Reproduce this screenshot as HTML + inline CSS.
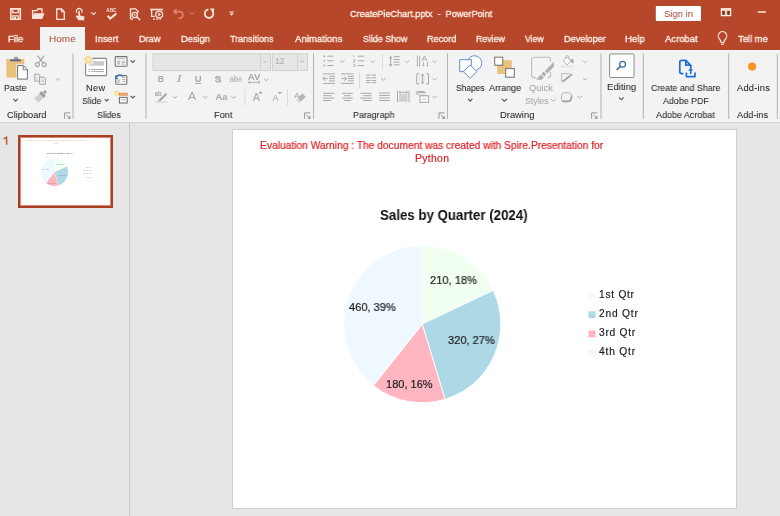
<!DOCTYPE html>
<html><head><meta charset="utf-8">
<style>
*{margin:0;padding:0;box-sizing:border-box}
html,body{width:780px;height:516px;overflow:hidden;background:#E6E6E6;font-family:"Liberation Sans",sans-serif;position:relative}
.abs{position:absolute}
#title{left:0;top:0;width:780px;height:50px;background:#B7472A}
#hometab{left:40px;top:27px;width:45px;height:23px;background:#F3F3F3}
#ribbon{left:0;top:50px;width:780px;height:72px;background:#F3F3F3}
#rbline{left:0;top:122px;width:780px;height:1px;background:#D4D4D4}
#divider{left:129px;top:123px;width:1px;height:393px;background:#C8C8C8}
#slide{left:232px;top:129px;width:505px;height:380px;background:#fff;border:1px solid #CFCFCF}
#thumb{left:18px;top:135px;width:95px;height:73px;background:#fff;border:2px solid #A83F24;box-shadow:inset 0 0 0 1px #D98A72}
.t{position:absolute;white-space:pre;line-height:1;transform-origin:0 0;will-change:transform}
.lt{-webkit-text-stroke:0.35px currentColor}
.dk{-webkit-text-stroke:0.05px currentColor}
.sl{-webkit-text-stroke:0.2px currentColor}
svg{position:absolute;left:0;top:0;will-change:transform}
</style></head><body>
<div id="title" class="abs"></div>
<div id="hometab" class="abs"></div>
<div id="ribbon" class="abs"></div>
<div id="rbline" class="abs"></div>
<div id="divider" class="abs"></div>
<div id="slide" class="abs"></div>
<div id="thumb" class="abs"></div>
<svg width="780" height="516" viewBox="0 0 780 516">
<g id="qat" fill="none" stroke="#FBE5DA" stroke-width="1.6">
<!-- save -->
<path d="M10.8,8.9 H20.3 V19.2 H10.8 Z"/>
<path d="M12.8,9.5 V12.6 H18.3 V9.5" stroke-width="1.3"/>
<path d="M12.8,19 V15.8 H18.3 V19" stroke-width="1.3"/>
<rect x="14" y="16.8" width="2" height="2.2" fill="#FBE5DA" stroke="none"/>
<!-- open folder -->
<path d="M32.6,18.6 V10.6 H36.6 L37.8,9 H42 V12.8" stroke-width="1.3"/>
<path d="M33.8,13.2 H44.6 L42.2,19 H32 Z" fill="#FBE5DA" stroke="none"/>
<!-- new doc -->
<path d="M56.7,9 H61.6 L64.3,11.7 V19.3 H56.7 Z" stroke-width="1.3"/>
<path d="M61.4,9.2 V11.9 H64.1" stroke-width="1"/>
<!-- touch -->
<path d="M76.7,12.8 A2.9,2.9 0 1 1 81.9,12.5" stroke-width="1.3"/>
<path d="M79.2,16.5 V11.2" stroke-width="1.8"/>
<path d="M78.5,16 L76,15.6 L75.8,16.6 L78.6,20.2 H84.2 L84.4,16.6 L80,15.4 Z" fill="#FBE5DA" stroke="none"/>
<path d="M91.3,12.4 L93.6,14.5 L95.9,12.4" stroke-width="1.1"/>
<!-- abc check -->
<text x="106.3" y="11.7" font-family="Liberation Sans" font-weight="bold" font-size="4.6" fill="#FBE5DA" stroke="none" textLength="10" lengthAdjust="spacingAndGlyphs">ABC</text>
<path d="M107.6,15.8 L110.2,18.6 L116.4,13.4" stroke-width="2"/>
<!-- print preview -->
<path d="M130.5,19 V8.8 H135.6 L138,11.2 V13" stroke-width="1.3"/>
<path d="M130.5,19 H133" stroke-width="1.3"/>
<circle cx="134.8" cy="15" r="2.6" stroke-width="1.4"/>
<path d="M136.8,17 L140.2,20" stroke-width="1.6"/>
<rect x="134" y="14.2" width="1.6" height="1.6" fill="#FBE5DA" stroke="none" opacity="0.7"/>
<!-- present -->
<path d="M150.2,9.5 H162.9" stroke-width="1.6"/>
<path d="M151.6,10 V16.3 H154.8" stroke-width="1.3"/>
<circle cx="159.2" cy="14.5" r="3.4" stroke-width="1.3"/>
<path d="M158.3,12.6 L161,14.5 L158.3,16.4 Z" fill="#FBE5DA" stroke="none"/>
<path d="M153,19.2 H161" stroke-width="1.2" stroke-dasharray="2,1.2"/>
<!-- undo dim -->
<g stroke="#E38568" stroke-width="1.6">
<path d="M174,11.6 H179.5 A3.3,3.3 0 0 1 179.5,18.2 H178.6"/>
<path d="M176.6,9 L174,11.6 L176.6,14.2"/>
<path d="M189.7,12.6 L192,14.4 L194.3,12.6" stroke-width="1"/>
</g>
<!-- redo -->
<path d="M208.4,9.35 A4.3,4.3 0 1 0 212.4,10.9" stroke-width="1.8"/>
<path d="M209.6,8.5 L214.2,8.5 L213.6,13 Z" fill="#FBE5DA" stroke="none"/>
<!-- customize -->
<path d="M229.6,12 H233.6" stroke-width="1.2"/>
<path d="M229.4,13.4 L233.8,13.4 L231.6,15.8 Z" fill="#FBE5DA" stroke="none"/>
<!-- ribbon display -->
<rect x="720.8" y="8.2" width="10.4" height="8" fill="#F6CFC0" stroke="none"/>
<rect x="721.4" y="8.8" width="9.2" height="6.8" fill="none" stroke="#FFF2EA" stroke-width="1"/>
<rect x="722.2" y="11" width="2.6" height="3.8" fill="#7E2A14" stroke="none"/>
<rect x="727.2" y="11" width="2.6" height="3.8" fill="#7E2A14" stroke="none"/>
<!-- minimize -->
<path d="M757.8,12 H766" stroke-width="1.5"/>
<!-- sign in button -->
<rect x="655.8" y="6" width="45.2" height="15" rx="1" fill="#FFFFFF" stroke="none"/>
<!-- bulb -->
<path d="M721.2,42.6 Q721,40.6 719.4,39 A4.3,4.3 0 1 1 725.6,39 Q724,40.6 723.8,42.6 Z" stroke-width="1.2"/>
<path d="M721.2,44.4 H723.8" stroke-width="1.2"/>
</g>
<g id="ribbon-icons">
<!-- dividers -->
<g fill="#B4B4B4">
<rect x="72.5" y="53.5" width="1" height="65.5"/>
<rect x="145.5" y="53.5" width="1" height="65.5"/>
<rect x="313" y="53.5" width="1" height="65.5"/>
<rect x="447" y="53.5" width="1" height="65.5"/>
<rect x="600.5" y="53.5" width="1" height="65.5"/>
<rect x="642.8" y="53.5" width="1" height="65.5"/>
<rect x="728.2" y="53.5" width="1" height="65.5"/>
<rect x="776.8" y="53.5" width="1" height="65.5"/>
</g>
<g fill="#DADADA">
<rect x="244.5" y="89" width="1" height="16.5"/>
<rect x="287" y="89" width="1" height="16.5"/>
<rect x="382" y="54" width="1" height="15.5"/>
<rect x="359" y="72" width="1" height="16"/>
</g>
<!-- dialog launchers -->
<g fill="none" stroke="#8A8A8A" stroke-width="0.9">
<path d="M64.6,118.7 V112.9 H70.2"/><path d="M66.6,114.9 L70,118.3 M70,115.9 V118.3 H67.6"/>
<path d="M304.6,118.7 V112.9 H310.2"/><path d="M306.6,114.9 L310,118.3 M310,115.9 V118.3 H307.6"/>
<path d="M439,118.7 V112.9 H444.6"/><path d="M441,114.9 L444.4,118.3 M444.4,115.9 V118.3 H442"/>
<path d="M591.6,118.7 V112.9 H597.2"/><path d="M593.6,114.9 L597,118.3 M597,115.9 V118.3 H594.6"/>
</g>
<!-- dark chevrons -->
<g fill="none" stroke="#555" stroke-width="1.1">
<path d="M13.4,98.9 L15.6,101.1 L17.8,98.9"/>
<path d="M104.8,99.1 L106.7,101 L108.6,99.1"/>
<path d="M130.6,60.3 L132.8,62.4 L135,60.3"/>
<path d="M130.6,95.9 L132.8,98 L135,95.9"/>
<path d="M468,98.9 L470.2,101.2 L472.4,98.9"/>
<path d="M501.8,98.9 L504.4,101.2 L507,98.9"/>
<path d="M619,97.5 L621.3,99.8 L623.6,97.5"/>
</g>
<!-- gray chevrons -->
<g fill="none" stroke="#B0B0B0" stroke-width="1">
<path d="M55.8,78.4 L57.9,80.3 L60,78.4"/>
<path d="M172.6,96.1 L174.9,98.2 L177.2,96.1"/>
<path d="M202.9,96.1 L205.2,98.2 L207.5,96.1"/>
<path d="M231.2,96.1 L233.6,98.2 L236,96.1"/>
<path d="M264,78.7 L266.3,80.8 L268.6,78.7"/>
<path d="M340.3,60.4 L342.4,62.6 L344.5,60.4"/>
<path d="M370.3,60.4 L372.6,62.6 L374.9,60.4"/>
<path d="M404.8,60.6 L407,62.7 L409.2,60.6"/>
<path d="M432.5,60.6 L434.6,62.7 L436.7,60.6"/>
<path d="M381.2,78.1 L383.5,80.2 L385.8,78.1"/>
<path d="M432.5,78.1 L434.6,80.2 L436.7,78.1"/>
<path d="M432.5,96 L434.6,98.1 L436.7,96"/>
<path d="M551,99.2 L553.3,101.2 L555.6,99.2"/>
<path d="M583,60.6 L585.1,62.7 L587.2,60.6"/>
<path d="M583,78.1 L585.1,80.2 L587.2,78.1"/>
<path d="M577.2,96 L579.6,98.2 L582,96"/>
</g>

<!-- Paste -->
<path d="M6.4,59 H10 V61.8 H21 V59 H24.4 V65 H17 V77.6 H6.4 Z" fill="#EBC27C"/>
<path d="M10.1,61.6 V59.3 H14.2 V57.4 Q16,56 17.8,57.4 V59.3 H20.9 V61.6 Z" fill="#6A6A6A"/>
<circle cx="16" cy="58.4" r="0.8" fill="#F3F3F3"/>
<path d="M17.6,65.6 H23.4 L27.4,69.6 V79.1 H17.6 Z" fill="#F3F3F3" stroke="#F3F3F3" stroke-width="2.6"/>
<path d="M17.6,65.6 H23.4 L27.4,69.6 V79.1 H17.6 Z" fill="#FFFFFF" stroke="#707070" stroke-width="1"/>
<path d="M23.2,65.8 V69.8 H27.2" fill="none" stroke="#707070" stroke-width="0.9"/>
<!-- scissors -->
<g fill="none" stroke="#A3A3A3" stroke-width="1.1">
<path d="M37.4,55.6 L42.9,62.6 M44.2,55.6 L38.7,62.6"/>
<circle cx="37.4" cy="64.6" r="2"/><circle cx="44.2" cy="64.6" r="2"/>
</g>
<!-- copy -->
<g fill="#F3F3F3" stroke="#A3A3A3" stroke-width="1">
<path d="M34.7,74.2 H38.6 L39.6,75.2 V81.2 H34.7 Z"/>
<path d="M39.6,77.2 H44 L45.4,78.6 V84.3 H39.6 Z"/>
</g>
<g stroke="#BDBDBD" stroke-width="0.8"><path d="M35.8,77.5 H37.6 M35.8,79.2 H37.6 M41,80 H44 M41,81.6 H44"/></g>
<!-- format painter -->
<g transform="translate(39.6,97.4) rotate(45)">
<rect x="-3" y="-2.6" width="6" height="7.2" fill="#D0D0D0"/>
<rect x="-3.2" y="-5.6" width="6.4" height="3" rx="0.6" fill="#9C9C9C"/>
<rect x="-1.6" y="-9.2" width="3.2" height="3.2" rx="1" fill="#A4A4A4"/>
</g>
<!-- New slide -->
<rect x="85.6" y="58.4" width="21" height="17.2" rx="1.3" fill="#FFFFFF" stroke="#858585" stroke-width="1.1"/>
<rect x="88.4" y="61.2" width="15.5" height="4.4" fill="#C9C9C9"/>
<path d="M88.4,69.5 H90 M91.2,69.5 H103.9 M88.4,71.6 H90 M91.2,71.6 H103.9" stroke="#9E9E9E" stroke-width="0.9"/>
<polygon points="93.50,59.80 91.15,60.73 92.51,62.86 90.06,62.23 89.91,64.75 88.30,62.80 86.69,64.75 86.54,62.23 84.09,62.86 85.45,60.73 83.10,59.80 85.45,58.87 84.09,56.74 86.54,57.37 86.69,54.85 88.30,56.80 89.91,54.85 90.06,57.37 92.51,56.74 91.15,58.87" fill="#F3F3F3" stroke="#F3F3F3" stroke-width="1.4"/>
<polygon points="93.30,59.80 90.96,60.67 92.35,62.74 89.95,62.07 89.85,64.56 88.30,62.60 86.75,64.56 86.65,62.07 84.25,62.74 85.64,60.67 83.30,59.80 85.64,58.93 84.25,56.86 86.65,57.53 86.75,55.04 88.30,57.00 89.85,55.04 89.95,57.53 92.35,56.86 90.96,58.93" fill="#F5D985"/>
<circle cx="88.3" cy="59.8" r="1.8" fill="#FBEFC4"/>
<!-- layout -->
<rect x="115.2" y="56.6" width="11.8" height="9.6" rx="0.8" fill="#FFFFFF" stroke="#707070" stroke-width="1.1"/>
<path d="M117,58.6 H125.2" stroke="#BDBDBD" stroke-width="1.1"/>
<rect x="117" y="60.4" width="3.2" height="4.2" fill="#C4C4C4"/>
<path d="M121.4,61 H125.2 M121.4,62.6 H125.2 M121.4,64.2 H125.2" stroke="#9A9A9A" stroke-width="0.8"/>
<!-- reset -->
<rect x="115.8" y="75.6" width="11" height="8.6" rx="0.8" fill="#FFFFFF" stroke="#747474" stroke-width="1.1"/>
<path d="M117.2,79 H120.2 V83 H117.2 Z" fill="#CFCFCF"/>
<path d="M122,77.4 H125.4 M122,79.4 H125.4 M122,81.4 H125.4" stroke="#9A9A9A" stroke-width="0.8"/>
<path d="M116.4,77.6 A3.6,3.2 0 0 1 123,76.4" fill="none" stroke="#3E76B4" stroke-width="1.5"/>
<path d="M115,75.6 V79 H118.4 Z" fill="#3E76B4"/>
<!-- section -->
<polygon points="120.40,93.20 118.65,93.97 119.35,95.75 117.57,95.05 116.80,96.80 116.03,95.05 114.25,95.75 114.95,93.97 113.20,93.20 114.95,92.43 114.25,90.65 116.03,91.35 116.80,89.60 117.57,91.35 119.35,90.65 118.65,92.43" fill="#F5D985"/>
<circle cx="116.8" cy="93.2" r="1.2" fill="#FBEFC4"/>
<rect x="119.4" y="93.2" width="7.8" height="2" fill="#F2C18E" stroke="#E07B39" stroke-width="0.8"/>
<rect x="119.4" y="97.4" width="7.8" height="5.6" fill="#FFFFFF" stroke="#707070" stroke-width="1.1"/>
<path d="M120.8,99.8 H126" stroke="#A0A0A0" stroke-width="0.8"/>

<!-- Font boxes -->
<rect x="153.1" y="53.8" width="117.4" height="16.8" fill="#E6E6E6" stroke="#D0D0D0" stroke-width="1"/>
<path d="M260.6,54 V70.5" stroke="#D0D0D0" stroke-width="1"/>
<rect x="272.4" y="53.8" width="35" height="16.8" fill="#E6E6E6" stroke="#D0D0D0" stroke-width="1"/>
<path d="M297.6,54 V70.5" stroke="#D0D0D0" stroke-width="1"/>
<g fill="none" stroke="#A8A8A8" stroke-width="0.8"><path d="M263.3,60.9 L265,62.3 L266.7,60.9"/><path d="M300.2,60.9 L302,62.3 L303.8,60.9"/></g>
<g fill="#A6A6A6" font-family="Liberation Sans">
<text x="157.8" y="82.1" font-size="9.2" font-weight="bold" textLength="6.2" lengthAdjust="spacingAndGlyphs">B</text>
<text x="176.6" y="82.1" font-size="9.4" font-family="Liberation Serif" font-style="italic" textLength="5.2" lengthAdjust="spacingAndGlyphs">I</text>
<text x="194.8" y="82.1" font-size="9.2" font-weight="bold" textLength="6.8" lengthAdjust="spacingAndGlyphs">U</text>
<rect x="194.8" y="83" width="6.6" height="0.9"/>
<text x="214.4" y="82.2" font-size="9.4" font-weight="bold" fill="#D0D0D0" textLength="6.8" lengthAdjust="spacingAndGlyphs" transform="translate(0.8,0.8)">S</text>
<text x="214.4" y="82.2" font-size="9.4" font-weight="bold" textLength="6.8" lengthAdjust="spacingAndGlyphs">S</text>
<text x="229.6" y="82.4" font-size="8.6" textLength="12.4" lengthAdjust="spacingAndGlyphs">abc</text>
<rect x="229.4" y="79.2" width="12.8" height="0.8" fill="#C4C4C4"/>
<text x="247.8" y="79.6" font-size="8.6" font-weight="bold" textLength="12.6" lengthAdjust="spacingAndGlyphs">AV</text>
<text x="188" y="100.4" font-size="11.2" textLength="8.2" lengthAdjust="spacingAndGlyphs">A</text>
<text x="215.6" y="99.8" font-size="9" font-weight="bold" textLength="11.8" lengthAdjust="spacingAndGlyphs">Aa</text>
<text x="252.8" y="101.3" font-size="10.2" textLength="7.2" lengthAdjust="spacingAndGlyphs">A</text>
<text x="272.4" y="101.3" font-size="8.6" textLength="6" lengthAdjust="spacingAndGlyphs">A</text>
<text x="154.8" y="96.4" font-size="7.6" font-weight="bold" textLength="6.8" lengthAdjust="spacingAndGlyphs">ab</text>
<text x="294.2" y="97.5" font-size="8" textLength="5.6" lengthAdjust="spacingAndGlyphs">A</text>
</g>
<g fill="none" stroke="#A6A6A6" stroke-width="0.9">
<path d="M248.4,82.3 H260 M250,80.8 L248.4,82.3 L250,83.8 M258.4,80.8 L260,82.3 L258.4,83.8"/>
<path d="M259.2,93.6 L260.6,91.9 L262,93.6" stroke-width="1.1"/>
</g>
<path d="M277.6,92 H282 L279.8,94.2 Z" fill="#A6A6A6"/>
<!-- highlighter -->
<path d="M158.6,100 L165.6,93 L167.2,94.6 L160.2,101.6 Z" fill="#A6A6A6"/>
<path d="M158.6,100 L157.6,101.4 L159.8,101.6 Z" fill="#A6A6A6"/>
<rect x="155.2" y="101.6" width="12.2" height="1.2" fill="#D8D8D8"/>
<!-- clear formatting eraser -->
<path d="M297.6,98.2 L302.4,93.4 L305.8,96.8 L301,101.6 Z" fill="#B5B5B5"/>
<path d="M297,99.6 L299.8,102.4" stroke="#A6A6A6" stroke-width="1"/>

<!-- Paragraph icons -->
<g fill="#A8A8A8">
<circle cx="324.2" cy="56.2" r="0.9"/><circle cx="324.2" cy="60.8" r="0.9"/><circle cx="324.2" cy="65.5" r="0.9"/>
</g>
<g stroke="#A8A8A8" stroke-width="1" fill="none">
<path d="M327.2,56.2 H333.4 M327.2,60.8 H333.4 M327.2,65.5 H333.4"/>
<path d="M357.6,56.2 H364.2 M357.6,60.8 H364.2 M357.6,65.5 H364.2"/>
<path d="M353.8,55 V57.4 M353.2,59.8 H355.2 L353.2,62 H355.4 M353.2,64.4 H355.2 L354.2,65.4 L355.2,66.4 H353.2" stroke-width="0.7"/>
<!-- indents -->
<path d="M322.8,73.9 H334.9 M329,76.4 H334.9 M329,78.6 H334.9 M329,80.9 H334.9 M322.8,83.4 H334.9"/>
<path d="M323,78.6 H328 M325.2,76.4 L323,78.6 L325.2,80.8"/>
<path d="M341,73.9 H353.8 M347.6,76.4 H353.8 M347.6,78.6 H353.8 M347.6,80.9 H353.8 M341,83.4 H353.8"/>
<path d="M341.2,78.6 H346.4 M344.2,76.4 L346.4,78.6 L344.2,80.8"/>
<!-- columns -->
<path d="M366,75.1 H370.4 M371.6,75.1 H376 M366,77.8 H370.4 M371.6,77.8 H376 M366,80.5 H370.4 M371.6,80.5 H376 M366,82.6 H370.4 M371.6,82.6 H376"/>
<!-- align -->
<path d="M323.2,93.3 H334.2 M323.2,95.7 H331.2 M323.2,98.1 H334.2 M323.2,100.5 H331.2"/>
<path d="M342,93.3 H352.8 M344,95.7 H350.8 M342,98.1 H352.8 M344,100.5 H350.8"/>
<path d="M360.3,93.3 H371.5 M363.3,95.7 H371.5 M360.3,98.1 H371.5 M363.3,100.5 H371.5"/>
<path d="M379.1,93 H389.8 M379.1,95.5 H389.8 M379.1,98 H389.8 M379.1,100.5 H389.8"/>
<!-- line spacing -->
<path d="M390.7,57.6 V64.8" stroke-width="1"/>
<path d="M389,58.4 L390.7,55.6 L392.4,58.4 Z M389,64 L390.7,66.8 L392.4,64 Z" fill="#A8A8A8" stroke="none"/>
<path d="M393.8,56.7 H399.6 M393.8,59.5 H399.6 M393.8,62.2 H399.6 M393.8,64.8 H399.6"/>
<!-- text direction -->
<path d="M417.4,55.6 V65.4 M419.6,55.6 V65.4 M423.5,62 V65.4 M427.5,62 V65.4" stroke-width="0.9"/>
<path d="M416.4,65 L417.4,66.8 L418.4,65 Z M418.6,65 L419.6,66.8 L420.6,65 Z M422.5,65 L423.5,66.8 L424.5,65 Z M426.5,65 L427.5,66.8 L428.5,65 Z" fill="#A8A8A8" stroke="none"/>
<!-- align text -->
<path d="M419.4,73.8 H416.8 V84 H419.4 M426,73.8 H428.5 V84 H426" stroke-width="1"/>
<path d="M422.6,75.6 V82.2" stroke-width="0.9"/>
<path d="M420.8,76 L422.6,73.6 L424.4,76 Z M420.8,81.8 L422.6,84.2 L424.4,81.8 Z" fill="#A8A8A8" stroke="none"/>
<path d="M419,77.6 H426.4 M419,80 H426.4" stroke-width="0.7" stroke-dasharray="1,0.8" stroke="#C4C4C4"/>
<!-- distribute -->
<path d="M397.5,90.8 V102.2 M409,90.8 V102.2 M399.4,92.3 H407.2" stroke-width="1"/>
<path d="M400.6,90.9 L399,92.3 L400.6,93.7 M406,90.9 L407.6,92.3 L406,93.7" stroke-width="0.9"/>
<rect x="399.2" y="94.2" width="8.2" height="7.4" fill="#C9C9C9" stroke="none"/>
<path d="M399.2,96 H407.4 M399.2,97.9 H407.4 M399.2,99.8 H407.4" stroke="#E2E2E2" stroke-width="0.6"/>
<!-- smartart -->
<path d="M416.4,91 H424.2 L426.6,93.2 H418.6 Z" fill="#B4B4B4" stroke="none"/>
<path d="M417.2,93.2 L419.4,95.4 H426.6" stroke="#A8A8A8" stroke-width="0.9"/>
<path d="M416.4,91.6 V94.6" stroke="#A8A8A8" stroke-width="0.9"/>
<rect x="420" y="95.8" width="8.6" height="6.6" fill="#FAFAFA" stroke="#A8A8A8" stroke-width="1"/>
<path d="M422,99.2 H426.6" stroke="#BDBDBD" stroke-width="0.7"/>
</g>
<g fill="#A6A6A6" font-family="Liberation Sans">
<text x="421.6" y="60.9" font-size="7.2" textLength="6" lengthAdjust="spacingAndGlyphs">A</text>
</g>

<!-- Shapes -->
<g fill="#FFFFFF" stroke="#5F8DCB" stroke-width="1">
<path d="M468.4,59.2 A7.2,7.2 0 1 1 476.4,69.95 L471.8,65.4 V59.2 Z" stroke="none"/>
<path d="M468.4,59.2 A7.2,7.2 0 1 1 476.4,69.95" fill="none"/>
<path d="M459.7,71.6 V59.7 H471.4 V65.6 M459.7,71.6 H465.4" fill="#FFFFFF"/>
<path d="M470.1,64.9 L476.8,71.6 L470.1,78.3 L463.4,71.6 Z"/>
</g>
<!-- Arrange -->
<rect x="497.2" y="60.2" width="14.6" height="13.8" fill="#EBC27C"/>
<rect x="494.7" y="57.2" width="8" height="8" fill="#FFFFFF" stroke="#6E6E6E" stroke-width="1"/>
<rect x="505.7" y="68.6" width="8.6" height="8.6" fill="#FFFFFF" stroke="#6E6E6E" stroke-width="1"/>
<!-- Quick styles -->
<path d="M536.3,77.6 H534.2 Q531.6,77.6 531.6,75 V60 Q531.6,57.3 534.3,57.3 H548 Q550.6,57.3 550.6,60 V61.8" fill="none" stroke="#BDBDBD" stroke-width="1.1"/>
<path d="M550.6,72.2 V75 Q550.6,77.6 548,77.6 H547.6" fill="none" stroke="#BDBDBD" stroke-width="1.1"/>
<path d="M536.2,79.8 L540.8,74.6 L543.8,77.4 L541.8,79.8 Z" fill="#B0B0B0"/>
<path d="M541.6,73.8 L543.6,71.8 L546.2,74.4 L544.2,76.4 Z" fill="#A8A8A8"/>
<path d="M544.8,71.2 L553.8,61.8 L554,66.4 L547.4,73.6 Z" fill="#B0B0B0"/>
<!-- shape fill -->
<path d="M563.2,61 L567.1,57.1 L571,61 L567.1,64.9 Z" fill="#FFFFFF" stroke="#B0B0B0" stroke-width="1"/>
<path d="M565.4,58.6 Q565.2,55.2 567.6,55.4 Q569.4,55.8 568.8,58.6" fill="none" stroke="#B0B0B0" stroke-width="0.9"/>
<path d="M570.4,59.6 L572.6,58.8 L574,61.6 Q573.6,63.6 572,63.2 Z" fill="#A8A8A8"/>
<rect x="560.8" y="65.8" width="13.4" height="1.4" fill="#E2E2E2"/>
<!-- shape outline -->
<path d="M561.6,81 V73.6 H569.6" fill="none" stroke="#B8B8B8" stroke-width="1"/>
<path d="M562.6,80.6 L571.4,73.4 L572.8,74.8 L564,82 L561.8,82.2 Z" fill="#A8A8A8"/>
<!-- effects -->
<path d="M563.4,92.8 H569.4 Q572.2,93.4 571.8,96.4 L570.8,99.6 Q570,101.4 568.2,101.4 H563.8 Q561,101 561.4,98.2 L562,94.6 Q562.4,92.8 563.4,92.8 Z" fill="#F2F2F2" stroke="#B4B4B4" stroke-width="1"/>
<path d="M571.8,96.4 L570.8,99.6 Q570,101.4 568.2,101.4 H563.8 Q563,101.3 562.4,101" fill="none" stroke="#9E9E9E" stroke-width="1.6"/>
<!-- Editing button -->
<rect x="609.6" y="53.9" width="24.4" height="23.6" rx="1" fill="#FCFCFC" stroke="#8E8E8E" stroke-width="1"/>
<circle cx="622.6" cy="64.2" r="2.9" fill="none" stroke="#416E9F" stroke-width="1.3"/>
<path d="M620.5,66.4 L617.2,69.4" stroke="#416E9F" stroke-width="1.7" stroke-linecap="round"/>
<!-- Acrobat -->
<g fill="none" stroke="#1D6FD6" stroke-width="1.7" stroke-linejoin="round">
<path d="M683.4,73.6 H681.6 Q679.8,73.6 679.8,71.8 V62.2 Q679.8,60.4 681.6,60.4 H685.8 L690.8,65.4 V68"/>
<path d="M685.8,60.6 V65.2 H690.6"/>
<path d="M686.4,72.4 V76.6 H695 V72.4"/>
<path d="M690.7,74 V68.6"/>
</g>
<path d="M688.2,70.6 L690.7,67.8 L693.2,70.6 Z" fill="#1D6FD6"/>
<!-- Add-ins -->
<rect x="745.5" y="57.5" width="20" height="20" fill="none" stroke="#EDEDED" stroke-width="0.8"/>
<circle cx="752.1" cy="66.6" r="4.1" fill="#F7951F"/>
</g>
<g id="pie">
<path d="M422.2,324.1 L422.20,245.50 A78.6,78.6 0 0 1 493.20,290.39 Z" fill="#F0FFF0" stroke="#FFFFFF" stroke-width="0.9" stroke-linejoin="round"/>
<path d="M422.2,324.1 L493.20,290.39 A78.6,78.6 0 0 1 445.05,399.31 Z" fill="#ADD8E6" stroke="#FFFFFF" stroke-width="0.9" stroke-linejoin="round"/>
<path d="M422.2,324.1 L445.05,399.31 A78.6,78.6 0 0 1 373.27,385.61 Z" fill="#FFB6C1" stroke="#FFFFFF" stroke-width="0.9" stroke-linejoin="round"/>
<path d="M422.2,324.1 L373.27,385.61 A78.6,78.6 0 0 1 422.20,245.50 Z" fill="#F0F8FF" stroke="#FFFFFF" stroke-width="0.9" stroke-linejoin="round"/>
<rect x="588.5" y="292.5" width="7" height="7" fill="#F0FFF0"/>
<rect x="588.5" y="311.3" width="7" height="6.8" fill="#ADD8E6"/>
<rect x="588.5" y="330.5" width="7" height="7" fill="#FFB6C1"/>
<rect x="588.5" y="349.5" width="7" height="7" fill="#F0F8FF"/>
</g>
<g id="thumbcontent" transform="translate(21,138) scale(0.17624) translate(-233,-130)">
<use href="#pie"/>
<g font-family="Liberation Sans" fill="#1E1E1E" opacity="0.6">
<text x="260.8" y="149.4" font-size="10.6" fill="#F06060" textLength="342.7" lengthAdjust="spacingAndGlyphs">Evaluation Warning : The document was created with Spire.Presentation for</text>
<text x="415.4" y="162.5" font-size="10.6" fill="#F06060" textLength="32.6" lengthAdjust="spacingAndGlyphs">Python</text>
<text x="379.8" y="220" font-size="14" font-weight="bold" fill="#222" textLength="146.7" lengthAdjust="spacingAndGlyphs">Sales by Quarter (2024)</text>
<text x="430.8" y="284.6" font-size="11.5" textLength="46.1" lengthAdjust="spacingAndGlyphs" fill="#555">210, 18%</text>
<text x="349.6" y="311.5" font-size="11.5" textLength="46.2" lengthAdjust="spacingAndGlyphs" fill="#555">460, 39%</text>
<text x="448.5" y="344.2" font-size="11.5" textLength="46.1" lengthAdjust="spacingAndGlyphs" fill="#555">320, 27%</text>
<text x="386.9" y="388.5" font-size="11.5" textLength="45.6" lengthAdjust="spacingAndGlyphs" fill="#555">180, 16%</text>
<text x="599.4" y="298.1" font-size="10" textLength="34" lengthAdjust="spacingAndGlyphs" fill="#777">1st Qtr</text>
<text x="599.4" y="317.6" font-size="10" textLength="38" lengthAdjust="spacingAndGlyphs" fill="#777">2nd Qtr</text>
<text x="599.4" y="336.8" font-size="10" textLength="36" lengthAdjust="spacingAndGlyphs" fill="#777">3rd Qtr</text>
<text x="599.4" y="356.1" font-size="10" textLength="36" lengthAdjust="spacingAndGlyphs" fill="#777">4th Qtr</text>
</g>
</g>
<path d="M6.6,144.8 V137 L3.6,139" fill="none" stroke="#B95A3C" stroke-width="1.5" stroke-linejoin="round"/>

</svg>
<span class="t lt" style="left:350.44px;top:9.47px;font-size:9.92px;color:#FFF0E8;font-weight:normal;letter-spacing:0.000px;transform:scaleX(0.9191)">CreatePieChart.pptx  -  PowerPoint</span>
<span class="t " style="left:663.82px;top:8.57px;font-size:9.92px;color:#A04530;font-weight:normal;letter-spacing:0.000px;transform:scaleX(0.9603)">Sign in</span>
<span class="t lt" style="left:7.95px;top:33.99px;font-size:9.78px;color:#FFF0E8;font-weight:normal;letter-spacing:0.000px;transform:scaleX(0.9646)">File</span>
<span class="t " style="left:48.90px;top:33.99px;font-size:9.78px;color:#B04A30;font-weight:normal;letter-spacing:0.000px;transform:scaleX(1.0263)">Home</span>
<span class="t lt" style="left:95.46px;top:33.99px;font-size:9.78px;color:#FFF0E8;font-weight:normal;letter-spacing:0.000px;transform:scaleX(0.9495)">Insert</span>
<span class="t lt" style="left:138.86px;top:33.99px;font-size:9.78px;color:#FFF0E8;font-weight:normal;letter-spacing:0.000px;transform:scaleX(0.9408)">Draw</span>
<span class="t lt" style="left:180.66px;top:33.99px;font-size:9.78px;color:#FFF0E8;font-weight:normal;letter-spacing:0.000px;transform:scaleX(0.9518)">Design</span>
<span class="t lt" style="left:230.42px;top:33.99px;font-size:9.78px;color:#FFF0E8;font-weight:normal;letter-spacing:0.000px;transform:scaleX(0.9178)">Transitions</span>
<span class="t lt" style="left:294.70px;top:33.99px;font-size:9.78px;color:#FFF0E8;font-weight:normal;letter-spacing:0.000px;transform:scaleX(0.9819)">Animations</span>
<span class="t lt" style="left:362.85px;top:33.99px;font-size:9.78px;color:#FFF0E8;font-weight:normal;letter-spacing:0.000px;transform:scaleX(0.9075)">Slide Show</span>
<span class="t lt" style="left:426.57px;top:33.99px;font-size:9.78px;color:#FFF0E8;font-weight:normal;letter-spacing:0.000px;transform:scaleX(0.9342)">Record</span>
<span class="t lt" style="left:475.80px;top:33.99px;font-size:9.78px;color:#FFF0E8;font-weight:normal;letter-spacing:0.000px;transform:scaleX(0.8995)">Review</span>
<span class="t lt" style="left:525.30px;top:33.99px;font-size:9.78px;color:#FFF0E8;font-weight:normal;letter-spacing:0.000px;transform:scaleX(0.8867)">View</span>
<span class="t lt" style="left:563.77px;top:33.99px;font-size:9.78px;color:#FFF0E8;font-weight:normal;letter-spacing:0.000px;transform:scaleX(0.9392)">Developer</span>
<span class="t lt" style="left:625.24px;top:33.99px;font-size:9.78px;color:#FFF0E8;font-weight:normal;letter-spacing:0.000px;transform:scaleX(0.9752)">Help</span>
<span class="t lt" style="left:665.10px;top:33.99px;font-size:9.78px;color:#FFF0E8;font-weight:normal;letter-spacing:0.000px;transform:scaleX(0.9699)">Acrobat</span>
<span class="t lt" style="left:737.61px;top:33.99px;font-size:9.78px;color:#FFF0E8;font-weight:normal;letter-spacing:0.000px;transform:scaleX(0.9632)">Tell me</span>
<span class="t dk" style="left:4.19px;top:83.29px;font-size:9.78px;color:#262626;font-weight:normal;letter-spacing:0.000px;transform:scaleX(0.9051)">Paste</span>
<span class="t dk" style="left:7.24px;top:110.66px;font-size:9.22px;color:#262626;font-weight:normal;letter-spacing:0.000px;transform:scaleX(1.0006)">Clipboard</span>
<span class="t dk" style="left:86.36px;top:83.76px;font-size:9.22px;color:#262626;font-weight:normal;letter-spacing:0.312px;transform:scaleX(1.0000)">New</span>
<span class="t dk" style="left:82.15px;top:95.73px;font-size:9.50px;color:#262626;font-weight:normal;letter-spacing:0.000px;transform:scaleX(0.9218)">Slide</span>
<span class="t dk" style="left:97.45px;top:110.66px;font-size:9.22px;color:#262626;font-weight:normal;letter-spacing:0.000px;transform:scaleX(0.9444)">Slides</span>
<span class="t dk" style="left:274.71px;top:57.35px;font-size:9.36px;color:#A8A8A8;font-weight:normal;letter-spacing:0.000px;transform:scaleX(0.9011)">12</span>
<span class="t dk" style="left:213.77px;top:110.66px;font-size:9.22px;color:#262626;font-weight:normal;letter-spacing:0.000px;transform:scaleX(0.9928)">Font</span>
<span class="t dk" style="left:353.29px;top:110.66px;font-size:9.22px;color:#262626;font-weight:normal;letter-spacing:0.000px;transform:scaleX(0.9619)">Paragraph</span>
<span class="t dk" style="left:455.66px;top:83.65px;font-size:9.36px;color:#262626;font-weight:normal;letter-spacing:0.000px;transform:scaleX(0.9008)">Shapes</span>
<span class="t dk" style="left:489.00px;top:83.65px;font-size:9.36px;color:#262626;font-weight:normal;letter-spacing:0.000px;transform:scaleX(0.9711)">Arrange</span>
<span class="t dk" style="left:528.72px;top:83.65px;font-size:9.36px;color:#A8A8A8;font-weight:normal;letter-spacing:0.000px;transform:scaleX(1.0026)">Quick</span>
<span class="t dk" style="left:524.55px;top:95.73px;font-size:9.50px;color:#A8A8A8;font-weight:normal;letter-spacing:0.000px;transform:scaleX(0.9128)">Styles</span>
<span class="t dk" style="left:500.35px;top:110.66px;font-size:9.22px;color:#262626;font-weight:normal;letter-spacing:0.000px;transform:scaleX(1.0167)">Drawing</span>
<span class="t dk" style="left:606.64px;top:81.71px;font-size:9.64px;color:#262626;font-weight:normal;letter-spacing:0.000px;transform:scaleX(0.9910)">Editing</span>
<span class="t dk" style="left:650.96px;top:83.65px;font-size:9.36px;color:#262626;font-weight:normal;letter-spacing:0.000px;transform:scaleX(0.9417)">Create and Share</span>
<span class="t dk" style="left:663.00px;top:95.73px;font-size:9.50px;color:#262626;font-weight:normal;letter-spacing:0.000px;transform:scaleX(0.9344)">Adobe PDF</span>
<span class="t dk" style="left:656.00px;top:110.66px;font-size:9.22px;color:#262626;font-weight:normal;letter-spacing:0.000px;transform:scaleX(0.9721)">Adobe Acrobat</span>
<span class="t dk" style="left:736.50px;top:83.65px;font-size:9.36px;color:#262626;font-weight:normal;letter-spacing:0.192px;transform:scaleX(1.0000)">Add-ins</span>
<span class="t dk" style="left:737.40px;top:110.66px;font-size:9.22px;color:#262626;font-weight:normal;letter-spacing:0.000px;transform:scaleX(0.9910)">Add-ins</span>
<span class="t sl" style="left:259.98px;top:140.56px;font-size:10.40px;color:#DC1F24;font-weight:normal;letter-spacing:0.000px;transform:scaleX(0.9853)">Evaluation Warning : The document was created with Spire.Presentation for</span>
<span class="t sl" style="left:414.57px;top:153.66px;font-size:10.40px;color:#DC1F24;font-weight:normal;letter-spacing:0.328px;transform:scaleX(1.0000)">Python</span>
<span class="t " style="left:379.53px;top:207.89px;font-size:14.25px;color:#111111;font-weight:bold;letter-spacing:0.000px;transform:scaleX(0.9316)">Sales by Quarter (2024)</span>
<span class="t sl" style="left:430.24px;top:274.98px;font-size:11.31px;color:#1E1E1E;font-weight:normal;letter-spacing:0.000px;transform:scaleX(0.9828)">210, 18%</span>
<span class="t sl" style="left:349.38px;top:302.00px;font-size:11.17px;color:#1E1E1E;font-weight:normal;letter-spacing:0.000px;transform:scaleX(0.9901)">460, 39%</span>
<span class="t sl" style="left:448.17px;top:334.70px;font-size:11.17px;color:#1E1E1E;font-weight:normal;letter-spacing:0.000px;transform:scaleX(0.9903)">320, 27%</span>
<span class="t sl" style="left:386.13px;top:379.36px;font-size:10.75px;color:#1E1E1E;font-weight:normal;letter-spacing:0.000px;transform:scaleX(1.0276)">180, 16%</span>
<span class="t sl" style="left:598.89px;top:289.63px;font-size:10.20px;color:#1E1E1E;font-weight:normal;letter-spacing:0.740px;transform:scaleX(1.0000)">1st Qtr</span>
<span class="t sl" style="left:599.09px;top:308.83px;font-size:10.20px;color:#1E1E1E;font-weight:normal;letter-spacing:0.821px;transform:scaleX(1.0000)">2nd Qtr</span>
<span class="t sl" style="left:599.29px;top:328.23px;font-size:10.20px;color:#1E1E1E;font-weight:normal;letter-spacing:0.750px;transform:scaleX(1.0000)">3rd Qtr</span>
<span class="t sl" style="left:599.40px;top:347.43px;font-size:10.20px;color:#1E1E1E;font-weight:normal;letter-spacing:0.826px;transform:scaleX(1.0000)">4th Qtr</span>
</body></html>
